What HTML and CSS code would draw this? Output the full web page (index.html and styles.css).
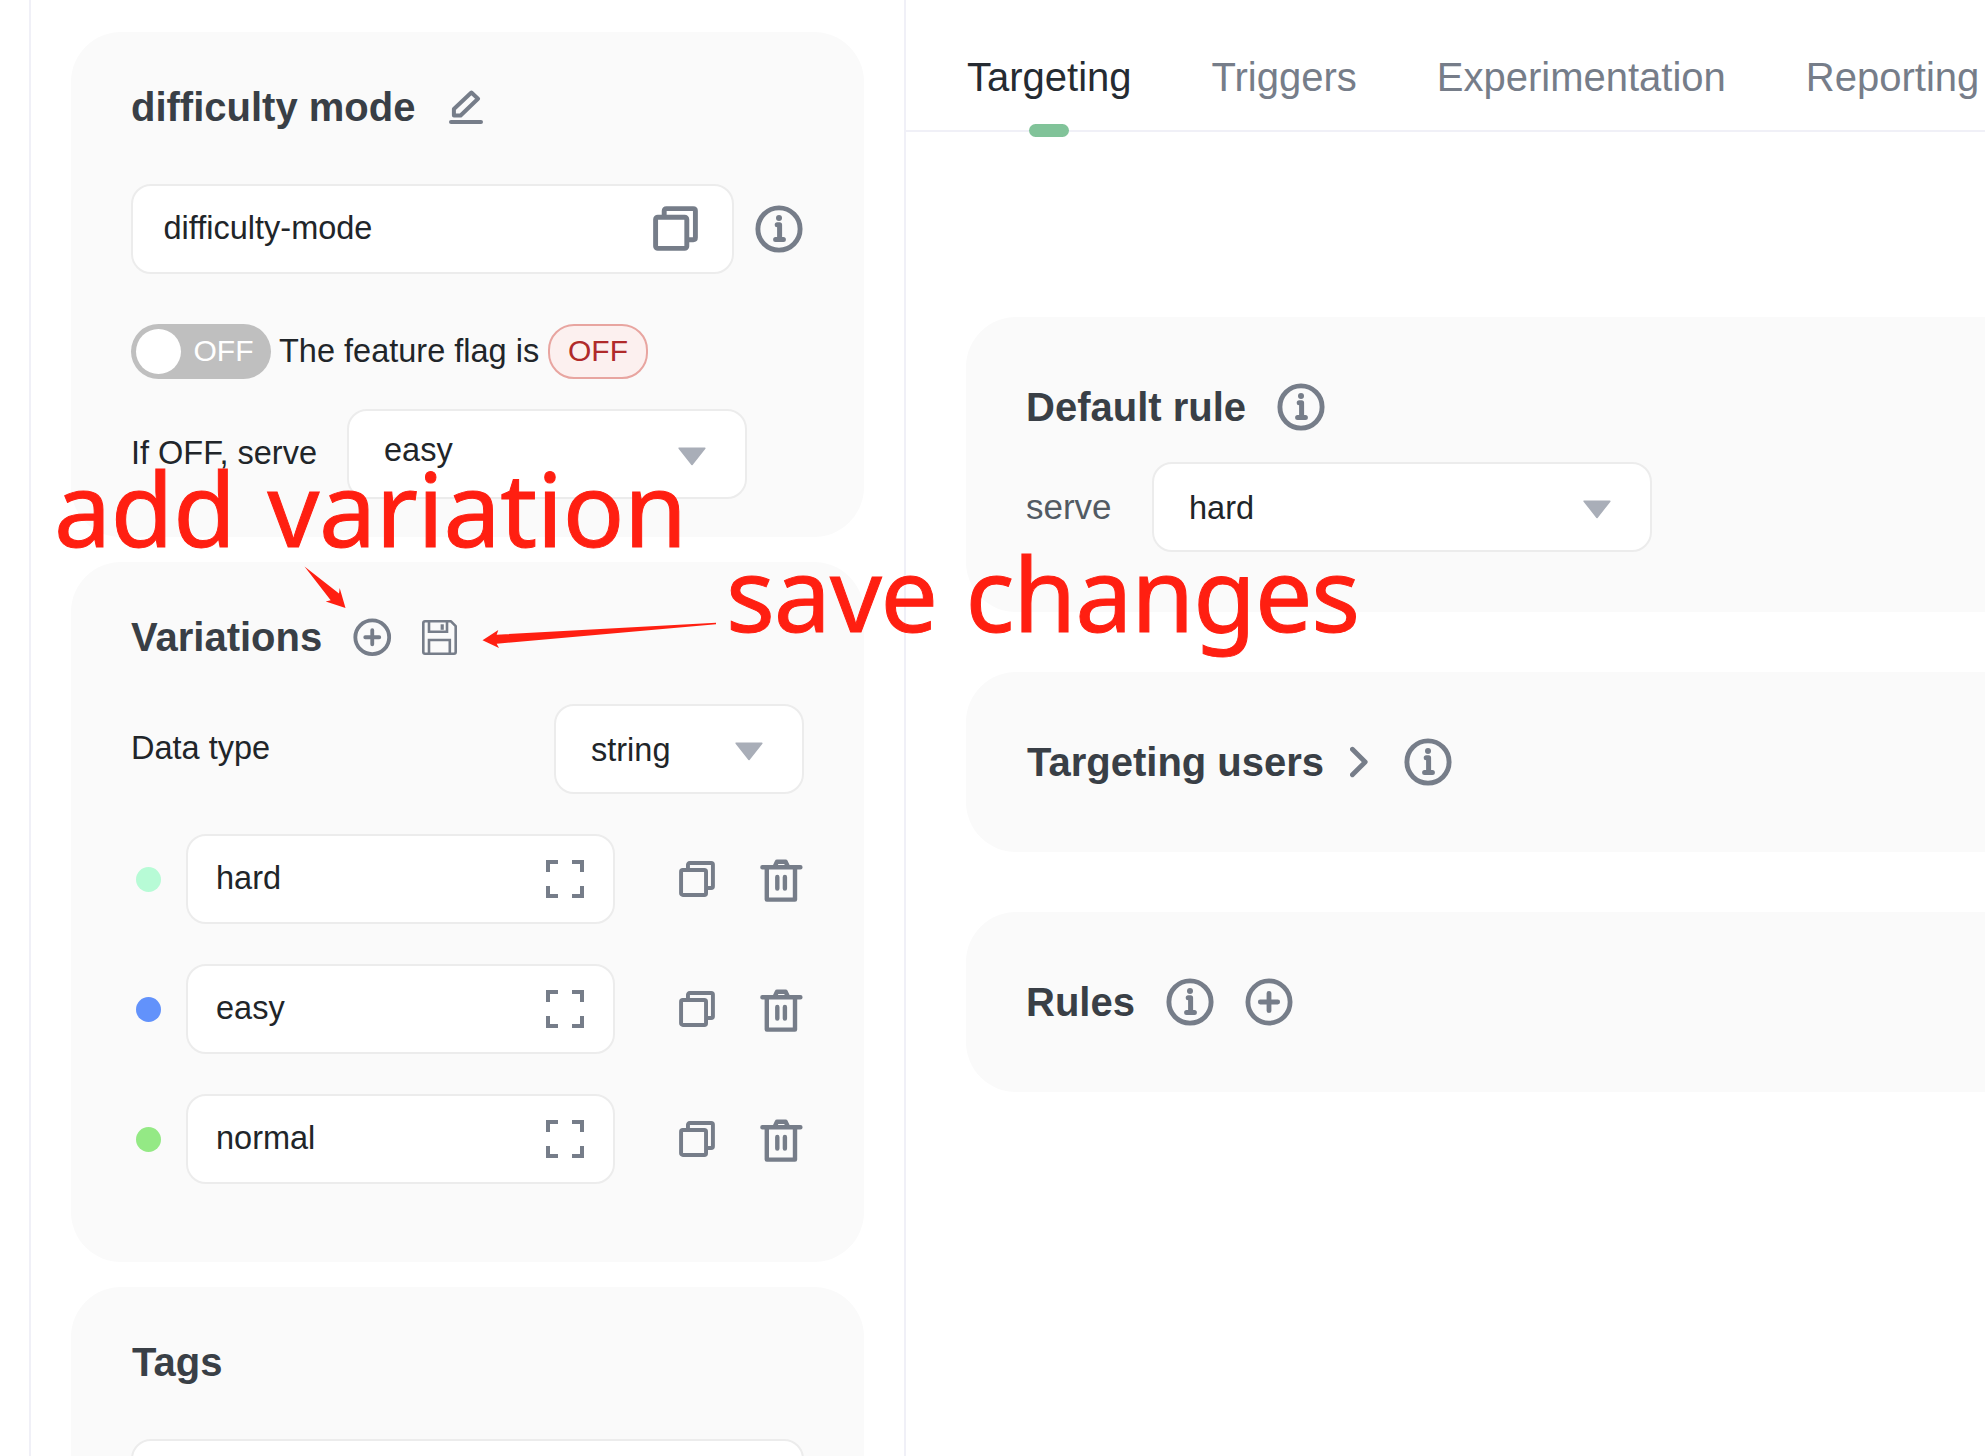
FILE: index.html
```html
<!DOCTYPE html>
<html lang="en">
<head>
<meta charset="utf-8">
<title>difficulty mode</title>
<link rel="stylesheet" href="styles.css">
</head>
<body>
<svg class="sprite" aria-hidden="true">
  <symbol id="info" viewBox="0 0 48 48"><circle cx="24" cy="24" r="21.1" fill="none" stroke="currentColor" stroke-width="4.9"/><circle cx="24" cy="13" r="3" fill="currentColor"/><path d="M22.2 19.8H24.6V34.5M20.6 34.5H28.4" fill="none" stroke="currentColor" stroke-width="5" stroke-linecap="round" stroke-linejoin="round"/></symbol>
  <symbol id="plus" viewBox="0 0 48 48"><circle cx="24" cy="24" r="21.1" fill="none" stroke="currentColor" stroke-width="4.8"/><path d="M24 15.3V32.7M15.3 24H32.7" fill="none" stroke="currentColor" stroke-width="4.8" stroke-linecap="round"/></symbol>
  <symbol id="copy" viewBox="0 0 45 45"><g fill="none" stroke="currentColor" stroke-width="4.9" stroke-linejoin="round"><rect x="2.6" y="11.2" width="31.2" height="31.2" rx="2.2"/><path d="M11.2 10V4.8Q11.2 2.6 13.4 2.6H40.2Q42.4 2.6 42.4 4.8V31.6Q42.4 33.8 40.2 33.8H35"/></g></symbol>
  <symbol id="edit" viewBox="0 0 34 34"><g fill="none" stroke="currentColor" stroke-width="4"><path d="M22.4 2.5L29 8.7L11.6 25.5H4.9V19Z" stroke-linejoin="round"/><path d="M2 32H32" stroke-linecap="round"/></g></symbol>
  <symbol id="save" viewBox="0 0 35 35"><g fill="none" stroke="currentColor" stroke-width="2.6"><path d="M3 1.3H29L33.7 6.2V32Q33.7 33.7 32 33.7H3Q1.3 33.7 1.3 32V3Q1.3 1.3 3 1.3Z" stroke-linejoin="round"/><path d="M7 1.5V11.7H25V1.5M7 33.5V20H27.8V33.5"/><path d="M20.2 4.3V9.8" stroke-width="3.2"/></g></symbol>
  <symbol id="expand" viewBox="0 0 38 38"><path d="M12 2H2V12M26 2H36V12M12 36H2V26M26 36H36V26" fill="none" stroke="currentColor" stroke-width="4"/></symbol>
  <symbol id="trash" viewBox="0 0 43 43"><g fill="none" stroke="currentColor" stroke-width="4.4"><path d="M2.4 8.2H40.4M17.3 17.9V29.6M24.9 17.9V29.6" stroke-linecap="round"/><path d="M6.8 9V40.6H35V9M14.8 7.5L17 2.7H25.6L27.8 7.5" stroke-linejoin="round"/></g></symbol>
  <symbol id="caret" viewBox="0 0 28 19"><path d="M1.2 1.2H26.8L14 17.4Z" fill="currentColor" stroke="currentColor" stroke-width="1.6" stroke-linejoin="round"/></symbol>
  <symbol id="chevron" viewBox="0 0 18 32"><path d="M2.4 3.2L15.2 16L2.4 28.8" fill="none" stroke="currentColor" stroke-width="4.8" stroke-linecap="round" stroke-linejoin="round"/></symbol>
</svg>

<div class="page">
  <aside class="side">
    <section class="card flag-card">
      <div class="heading"><h2>difficulty mode</h2><svg class="edit"><use href="#edit"/></svg></div>
      <div class="key-row">
        <div class="box key-box"><span>difficulty-mode</span><svg class="copy-lg"><use href="#copy"/></svg></div>
        <svg class="icon-lg"><use href="#info"/></svg>
      </div>
      <div class="status-row">
        <div class="switch"><i></i><span>OFF</span></div>
        <span class="status-text">The feature flag is</span>
        <span class="pill">OFF</span>
      </div>
      <div class="serve-row">
        <span class="serve-label">If OFF, serve</span>
        <div class="box select off-select"><span>easy</span><svg class="caret"><use href="#caret"/></svg></div>
      </div>
    </section>

    <section class="card variations-card">
      <div class="heading"><h2>Variations</h2><svg class="icon-sm add"><use href="#plus"/></svg><svg class="save"><use href="#save"/></svg></div>
      <div class="type-row">
        <span>Data type</span>
        <div class="box select type-select"><span>string</span><svg class="caret"><use href="#caret"/></svg></div>
      </div>
      <div class="variation"><i class="dot mint"></i><div class="box value"><span>hard</span><svg class="expand"><use href="#expand"/></svg></div><svg class="copy-sm"><use href="#copy"/></svg><svg class="trash"><use href="#trash"/></svg></div>
      <div class="variation"><i class="dot blue"></i><div class="box value"><span>easy</span><svg class="expand"><use href="#expand"/></svg></div><svg class="copy-sm"><use href="#copy"/></svg><svg class="trash"><use href="#trash"/></svg></div>
      <div class="variation"><i class="dot green"></i><div class="box value"><span>normal</span><svg class="expand"><use href="#expand"/></svg></div><svg class="copy-sm"><use href="#copy"/></svg><svg class="trash"><use href="#trash"/></svg></div>
    </section>

    <section class="card tags-card">
      <div class="heading"><h2>Tags</h2></div>
      <div class="box tags-box"></div>
    </section>
  </aside>

  <main class="main">
    <nav class="tabs">
      <a class="tab active">Targeting</a><a class="tab">Triggers</a><a class="tab">Experimentation</a><a class="tab">Reporting</a>
    </nav>
    <div class="panels">
      <section class="card panel default-panel">
        <div class="heading"><h2>Default rule</h2><svg class="icon-lg"><use href="#info"/></svg></div>
        <div class="default-row">
          <span class="default-label">serve</span>
          <div class="box select default-select"><span>hard</span><svg class="caret"><use href="#caret"/></svg></div>
        </div>
      </section>
      <section class="card panel">
        <div class="heading users-heading"><h2>Targeting users</h2><svg class="chevron"><use href="#chevron"/></svg><svg class="icon-lg"><use href="#info"/></svg></div>
      </section>
      <section class="card panel">
        <div class="heading"><h2>Rules</h2><svg class="icon-lg"><use href="#info"/></svg><svg class="icon-lg"><use href="#plus"/></svg></div>
      </section>
    </div>
  </main>

  <div class="note note-add">add variation</div>
  <div class="note note-save">save changes</div>
  <svg class="arrows" viewBox="0 0 1985 1456"><path d="M304.5 566.5L339 593.5L339.7 588L345.5 608L325.7 601.5L330.7 600.3Z"/><path d="M716 622.8L496.7 634.7L498.3 630L482.5 640.3L499 648L496.7 643.7L716 624.2Z"/></svg>
</div>
</body>
</html>
```

FILE: styles.css
```css
* { box-sizing: border-box; }
body {
  margin: 0;
  background: #fff;
  font-family: "Liberation Sans", Arial, sans-serif;
  font-size: 32.5px;
  color: #212529;
}
svg { display: block; flex: none; color: #767d89; overflow: visible; }
.sprite { position: absolute; width: 0; height: 0; }
.page {
  position: relative;
  display: flex;
  height: 1456px;
  overflow: hidden;
  white-space: nowrap;
}

/* Shared pieces */
.card { background: #fafafa; border-radius: 50px; padding: 50px 60px 0; }
.heading { display: flex; align-items: center; height: 50px; }
.heading h2 { margin: 0; font-size: 40px; line-height: 50px; font-weight: 700; color: #393f46; }
.box {
  display: flex;
  align-items: center;
  justify-content: space-between;
  height: 90px;
  border: 2px solid #ececec;
  border-radius: 20px;
  background: #fff;
}
.select { padding: 0 39px 0 35px; }
.caret { width: 28px; height: 19px; margin-top: 5px; color: #a9aeb8; }
.icon-lg { width: 48px; height: 48px; }
.icon-sm { width: 38.5px; height: 38.5px; }

/* Left column */
.side {
  flex: none;
  width: 877px;
  margin-left: 29px;
  padding: 32px 40px 0;
  border: solid #f0f0f7;
  border-width: 0 2px;
  display: flex;
  flex-direction: column;
  gap: 25px;
}
.side .card { flex: none; }
.flag-card { height: 505px; }
.edit { width: 34px; height: 34px; margin-left: 34px; }
.key-row { display: flex; align-items: center; gap: 21px; margin-top: 52px; }
.key-box { width: 603px; padding: 0 34.5px 0 30.5px; }
.key-box span { padding-bottom: 2px; }
.copy-lg { width: 45px; height: 45px; margin-bottom: 1px; }
.status-row { display: flex; align-items: center; height: 55px; margin-top: 50px; }
.switch {
  display: flex;
  align-items: center;
  width: 140px;
  height: 55px;
  padding-left: 5px;
  border-radius: 28px;
  background: #bfbfbf;
  color: #fff;
  font-size: 30px;
}
.switch i { width: 45px; height: 45px; border-radius: 50%; background: #fff; }
.switch span { margin-left: 12.5px; padding-bottom: 2px; }
.status-text { width: 269px; margin-left: 8px; padding-bottom: 1px; }
.pill {
  width: 100px;
  height: 55px;
  border: 2px solid #e8a5a0;
  border-radius: 26px;
  background: #fcf0ef;
  color: #b02a2a;
  font-size: 30px;
  line-height: 49px;
  text-align: center;
}
.serve-row { display: flex; align-items: center; margin-top: 30px; }
.serve-label { width: 216px; padding-bottom: 2px; }
.off-select { width: 400px; }
.off-select span { padding-bottom: 7px; }

.variations-card { height: 700px; }
.add { margin-left: 31px; }
.save { width: 35px; height: 35px; margin-left: 30px; }
.type-row { display: flex; align-items: center; justify-content: space-between; width: 673px; margin-top: 42px; }
.type-select { width: 250px; }
.type-select span { padding-top: 2px; }
.type-row > span { padding-bottom: 1px; }
.variation { display: flex; align-items: center; height: 90px; margin-top: 40px; }
.dot { width: 25px; height: 25px; margin-left: 5px; border-radius: 50%; }
.mint { background: #b7fbd6; }
.blue { background: #6292fb; }
.green { background: #94e985; }
.value { width: 429px; margin-left: 25px; padding: 0 29px 0 28px; }
.value span { padding-bottom: 1px; }
.expand { width: 38px; height: 38px; }
.copy-sm { width: 36px; height: 36px; margin-left: 64px; }
.trash { width: 43px; height: 43px; margin: 2px 0 0 45px; }

.tags-card { height: 300px; }
.tags-card h2 { margin-left: 1px; }
.tags-box { width: 673px; margin-top: 52px; }

/* Right column */
.main { flex: 1; min-width: 0; }
.tabs {
  display: flex;
  gap: 80px;
  height: 132px;
  padding: 52px 0 0 61px;
  border-bottom: 2px solid #f0f0f7;
  font-size: 40px;
  line-height: 50px;
}
.tab { position: relative; color: #767d89; }
.tab.active { color: #252b32; }
.tab.active::after {
  content: "";
  position: absolute;
  left: 62px;
  top: 72px;
  width: 40px;
  height: 13px;
  border-radius: 7px;
  background: #81c399;
}
.panels { display: flex; flex-direction: column; gap: 60px; padding: 185px 0 0 60px; }
.panel { width: 1100px; height: 180px; padding-top: 65px; }
.default-panel { height: 295px; }
.panel .icon-lg { margin-left: 31.5px; }
.panel h2 + .icon-lg { margin-left: 31px; }
.users-heading h2 { margin-left: 1px; }
.panel .chevron { width: 18px; height: 32px; margin-left: 26px; }
.panel .chevron + .icon-lg { margin-left: 36px; }
.default-row { display: flex; align-items: center; margin-top: 30px; color: #525a63; }
.default-label { width: 126px; font-size: 35px; }
.default-select { width: 500px; color: #212529; }
.default-select span { padding-top: 2px; }

/* Red callouts drawn over the interface */
.note {
  position: absolute;
  color: #ff1f11;
  font-family: "Noto Sans", "Open Sans", sans-serif;
  font-size: 102px;
  line-height: 140px;
  -webkit-text-stroke: 1px #ff1f11;
}
.note-add { left: 54px; top: 438px; letter-spacing: -0.4px; word-spacing: 6px; }
.note-save { left: 726px; top: 523px; letter-spacing: -1.1px; word-spacing: 3px; }
.arrows { position: absolute; inset: 0; width: 1985px; height: 1456px; fill: #ff1f11; pointer-events: none; }
```
